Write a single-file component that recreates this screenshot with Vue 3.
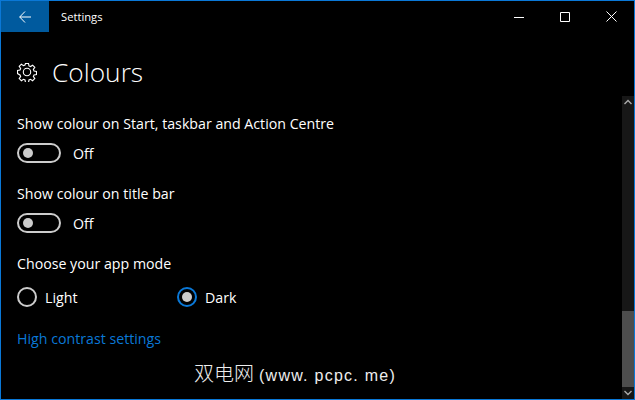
<template>
    <div class="window">
        <!-- title bar -->
        <div class="titlebar">
            <button class="back">
                <svg width="12" height="12" viewBox="0 0 12 12">
                    <path d="M6 .5.7 6l5.3 5.5M.7 6H12" fill="none" stroke="#fff" stroke-width="1" />
                </svg>
            </button>
            <span class="app-name">Settings</span>
            <div class="controls">
                <span class="ctl">
                    <svg width="10" height="10" viewBox="0 0 10 10"><path d="M0 5.5h10" stroke="#fff" fill="none" /></svg>
                </span>
                <span class="ctl">
                    <svg width="10" height="10" viewBox="0 0 10 10"><path d="M.5.5h9v9h-9z" stroke="#fff" fill="none" /></svg>
                </span>
                <span class="ctl">
                    <svg width="11" height="11" viewBox="0 0 11 11"><path d="M.5.5l10 10M10.5.5l-10 10" stroke="#fff" fill="none" /></svg>
                </span>
            </div>
        </div>

        <!-- page heading -->
        <div class="heading">
            <svg class="gear" width="20" height="20" viewBox="0 0 20 20">
                <path
                    d="M8.4 1h3.2l.5 2.6 1.6.7 2.2-1.5 2.3 2.3-1.5 2.2.7 1.6 2.6.5v3.2l-2.6.5-.7 1.6 1.5 2.2-2.3 2.3-2.2-1.5-1.6.7-.5 2.6H8.4l-.5-2.6-1.6-.7-2.2 1.5-2.3-2.3 1.5-2.2-.7-1.6L0 11.6V8.4l2.6-.5.7-1.6-1.5-2.2 2.3-2.3 2.2 1.5 1.6-.7z"
                    transform="translate(.5 .5) scale(.95)"
                    fill="none"
                    stroke="#fff"
                    stroke-width="1.2"
                />
                <circle cx="10" cy="10" r="3.7" fill="none" stroke="#fff" stroke-width="1.1" />
            </svg>
            <h1>Colours</h1>
        </div>

        <div class="body">
            <div class="content">
                <section v-for="item in toggles" :key="item" class="group">
                    <div class="label">{{ item }}</div>
                    <div class="toggle-row">
                        <span class="toggle"><i></i></span>
                        <span>Off</span>
                    </div>
                </section>

                <div class="label">Choose your app mode</div>
                <div class="radios">
                    <label class="radio"><span class="dot"></span>Light</label>
                    <label class="radio on"><span class="dot"></span>Dark</label>
                </div>

                <a class="link">High contrast settings</a>
            </div>

            <div class="scrollbar">
                <svg width="12" height="12" viewBox="0 0 12 12"><path d="M2.5 8 6 4.5 9.5 8" fill="none" stroke="#aaa" stroke-width="1.4" /></svg>
                <div class="track"><div class="thumb"></div></div>
                <svg width="12" height="12" viewBox="0 0 12 12"><path d="M2.5 4 6 7.5 9.5 4" fill="none" stroke="#aaa" stroke-width="1.4" /></svg>
            </div>
        </div>

        <div class="watermark">双电网<span>(www. pcpc. me)</span></div>
    </div>
</template>

<script setup>
const toggles = ["Show colour on Start, taskbar and Action Centre", "Show colour on title bar"];
</script>

<style scoped>
.window {
    position: relative;
    width: 635px;
    height: 400px;
    box-sizing: border-box;
    border: 1px solid #0a78d7;
    background: #000;
    color: #fff;
    font-family: "Open Sans", "Noto Sans", sans-serif;
    font-size: 14.2px;
    overflow: hidden;
    display: flex;
    flex-direction: column;
}

.titlebar {
    display: flex;
    align-items: center;
    height: 31px;
    flex: none;
}

.back {
    width: 48px;
    height: 31px;
    border: none;
    padding: 0;
    background: #005a9e;
    display: flex;
    align-items: center;
    justify-content: center;
}

.app-name {
    margin-left: 12px;
    font-size: 11.2px;
}

.controls {
    margin-left: auto;
    display: flex;
}

.ctl {
    width: 46px;
    height: 31px;
    display: flex;
    align-items: center;
    justify-content: center;
}

.heading {
    height: 64px;
    flex: none;
    display: flex;
    align-items: center;
    padding: 16px 0 0 16px;
    box-sizing: border-box;
}

.gear {
    margin-right: 15px;
}

h1 {
    margin: 0;
    font-size: 26.3px;
    font-weight: 300;
}

.body {
    flex: 1;
    display: flex;
    min-height: 0;
}

.content {
    flex: 1;
    padding: 18px 0 0 16px;
}

.group {
    margin-bottom: 21px;
}

.label {
    height: 20px;
    line-height: 20px;
}

.toggle-row {
    display: flex;
    align-items: center;
    gap: 12px;
    margin-top: 9px;
    height: 20px;
}

.toggle {
    width: 44px;
    height: 20px;
    box-sizing: border-box;
    border: 2px solid #ccc;
    border-radius: 10px;
    display: flex;
    align-items: center;
    padding-left: 4px;
}

.toggle i {
    width: 10px;
    height: 10px;
    border-radius: 50%;
    background: #ccc;
}

.radios {
    display: flex;
    margin-top: 13px;
    height: 20px;
}

.radio {
    width: 160px;
    display: flex;
    align-items: center;
    gap: 8px;
}

.dot {
    width: 20px;
    height: 20px;
    box-sizing: border-box;
    border: 2px solid #ccc;
    border-radius: 50%;
    display: flex;
    align-items: center;
    justify-content: center;
}

.radio.on .dot {
    border-color: #0a78d7;
}

.radio.on .dot::after {
    content: "";
    width: 10px;
    height: 10px;
    border-radius: 50%;
    background: #ccc;
}

.link {
    display: block;
    margin-top: 22px;
    line-height: 20px;
    color: #0a78d7;
}

.scrollbar {
    width: 12px;
    flex: none;
    background: #171717;
    display: flex;
    flex-direction: column;
}

.track {
    flex: 1;
    display: flex;
    flex-direction: column;
    justify-content: flex-end;
}

.thumb {
    height: 76px;
    background: #4d4d4d;
}

.watermark {
    position: absolute;
    left: 193px;
    top: 357px;
    font-family: "Noto Sans CJK SC", sans-serif;
    font-weight: 300;
    font-size: 20px;
    color: #eee;
    white-space: nowrap;
}

.watermark span {
    margin-left: 5px;
    font-family: "Liberation Sans", sans-serif;
    font-size: 16px;
    letter-spacing: 1.25px;
}
</style>
